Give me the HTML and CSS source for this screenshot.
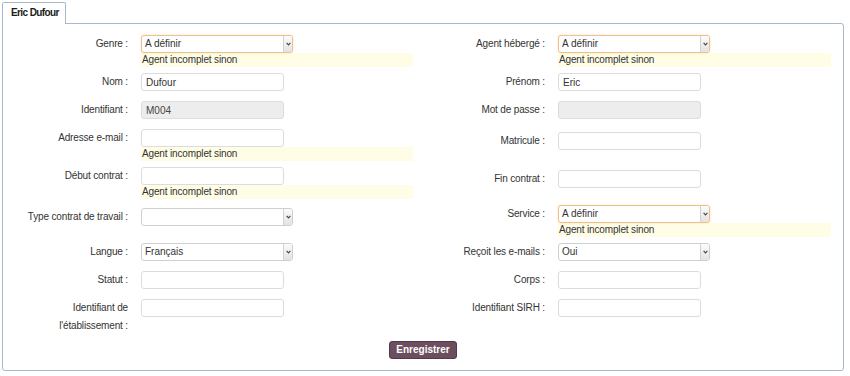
FILE: index.html
```html
<!DOCTYPE html>
<html lang="fr">
<head>
<meta charset="utf-8">
<title>Eric Dufour</title>
<link rel="stylesheet" href="styles.css">
</head>
<body>
<div class="page">
  <div class="tabs"><div class="tab">Eric Dufour</div></div>
  <form class="panel">
    <div class="grid">
      <!-- row 1 -->
      <label class="label">Genre :</label>
      <div class="control">
        <div class="select-wrap"><select class="select required"><option>A définir</option></select><span class="select-arrow"><svg width="5" height="4" viewBox="0 0 5 4"><path d="M0.6 0.8 L2.5 2.9 L4.4 0.8" fill="none" stroke="#444" stroke-width="1.1"/></svg></span></div>
        <div class="hint">Agent incomplet sinon</div>
      </div>
      <label class="label">Agent hébergé :</label>
      <div class="control">
        <div class="select-wrap"><select class="select required"><option>A définir</option></select><span class="select-arrow"><svg width="5" height="4" viewBox="0 0 5 4"><path d="M0.6 0.8 L2.5 2.9 L4.4 0.8" fill="none" stroke="#444" stroke-width="1.1"/></svg></span></div>
        <div class="hint">Agent incomplet sinon</div>
      </div>
      <!-- row 2 -->
      <label class="label">Nom :</label>
      <div class="control"><input class="input" type="text" value="Dufour"></div>
      <label class="label">Prénom :</label>
      <div class="control"><input class="input" type="text" value="Eric"></div>
      <!-- row 3 -->
      <label class="label">Identifiant :</label>
      <div class="control"><input class="input readonly" type="text" value="M004" readonly></div>
      <label class="label">Mot de passe :</label>
      <div class="control"><input class="input readonly" type="password" value="" readonly></div>
      <!-- row 4 -->
      <label class="label">Adresse e-mail :</label>
      <div class="control">
        <input class="input" type="text" value="">
        <div class="hint">Agent incomplet sinon</div>
      </div>
      <label class="label offset">Matricule :</label>
      <div class="control offset"><input class="input" type="text" value=""></div>
      <!-- row 5 -->
      <label class="label">Début contrat :</label>
      <div class="control">
        <input class="input" type="text" value="">
        <div class="hint">Agent incomplet sinon</div>
      </div>
      <label class="label offset">Fin contrat :</label>
      <div class="control offset"><input class="input" type="text" value=""></div>
      <!-- row 6 -->
      <label class="label offset">Type contrat de travail :</label>
      <div class="control offset">
        <div class="select-wrap"><select class="select"><option></option></select><span class="select-arrow"><svg width="5" height="4" viewBox="0 0 5 4"><path d="M0.6 0.8 L2.5 2.9 L4.4 0.8" fill="none" stroke="#444" stroke-width="1.1"/></svg></span></div>
      </div>
      <label class="label">Service :</label>
      <div class="control">
        <div class="select-wrap"><select class="select required"><option>A définir</option></select><span class="select-arrow"><svg width="5" height="4" viewBox="0 0 5 4"><path d="M0.6 0.8 L2.5 2.9 L4.4 0.8" fill="none" stroke="#444" stroke-width="1.1"/></svg></span></div>
        <div class="hint">Agent incomplet sinon</div>
      </div>
      <!-- row 7 -->
      <label class="label">Langue :</label>
      <div class="control">
        <div class="select-wrap"><select class="select"><option>Français</option></select><span class="select-arrow"><svg width="5" height="4" viewBox="0 0 5 4"><path d="M0.6 0.8 L2.5 2.9 L4.4 0.8" fill="none" stroke="#444" stroke-width="1.1"/></svg></span></div>
      </div>
      <label class="label">Reçoit les e-mails :</label>
      <div class="control">
        <div class="select-wrap"><select class="select"><option>Oui</option></select><span class="select-arrow"><svg width="5" height="4" viewBox="0 0 5 4"><path d="M0.6 0.8 L2.5 2.9 L4.4 0.8" fill="none" stroke="#444" stroke-width="1.1"/></svg></span></div>
      </div>
      <!-- row 8 -->
      <label class="label">Statut :</label>
      <div class="control"><input class="input" type="text" value=""></div>
      <label class="label">Corps :</label>
      <div class="control"><input class="input" type="text" value=""></div>
      <!-- row 9 -->
      <label class="label">Identifiant de<br>l'établissement :</label>
      <div class="control"><input class="input" type="text" value=""></div>
      <label class="label">Identifiant SIRH :</label>
      <div class="control"><input class="input" type="text" value=""></div>
    </div>
    <div class="actions"><button class="button" type="button">Enregistrer</button></div>
  </form>
</div>
</body>
</html>
```
FILE: styles.css
```css
* { box-sizing: border-box; }

body {
  margin: 0;
  background: #fff;
  color: #333;
  font-family: "Liberation Sans", Arial, sans-serif;
  font-size: 10px;
}

.page {
  padding: 2px 6px 0 2px;
}

.tabs {
  display: flex;
}

.tab {
  position: relative;
  z-index: 1;
  height: 22px;
  margin-bottom: -1px;
  padding: 0 6px 0 8px;
  border: 1px solid #a9b8c7;
  border-bottom: none;
  border-radius: 2px 2px 0 0;
  background: #fff;
  color: #1b1b1b;
  font-weight: bold;
  line-height: 20px;
  letter-spacing: -0.6px;
}

.panel {
  margin: 0;
  padding: 11px 0 11px 0;
  border: 1px solid #a9b8c7;
  border-radius: 0 3px 3px 3px;
}

.grid {
  display: grid;
  grid-template-columns: 138px 272px 145px 273px;
  row-gap: 10px;
  align-items: start;
}

.label {
  padding-right: 13px;
  text-align: right;
  line-height: 18px;
  letter-spacing: -0.15px;
  color: #333;
}

.offset {
  margin-top: 3px;
}

.control {
  display: flex;
  flex-direction: column;
  align-items: flex-start;
}

.input {
  width: 143px;
  height: 18px;
  margin: 0;
  padding: 0 4px;
  border: 1px solid #dcdcdc;
  border-radius: 3px;
  background: #fff;
  color: #333;
  font-family: inherit;
  font-size: 10px;
  outline: none;
}

.readonly {
  background: #ededed;
  color: #444;
}

.select-wrap {
  position: relative;
  width: 152px;
  height: 18px;
}

.select {
  display: block;
  width: 100%;
  height: 18px;
  margin: 0;
  padding: 0 12px 0 3px;
  border: 1px solid #cfcfcf;
  border-radius: 3px;
  background: #fff;
  color: #333;
  font-family: inherit;
  font-size: 10px;
  line-height: 16px;
  appearance: none;
  -webkit-appearance: none;
  outline: none;
}

.select.required {
  border-color: #f0c08a;
  box-shadow: 0 0 2px rgba(240, 175, 100, 0.45);
}

.select-arrow {
  position: absolute;
  top: 1px;
  right: 1px;
  bottom: 1px;
  width: 9px;
  display: flex;
  align-items: center;
  justify-content: center;
  border-left: 1px solid #d2d2d2;
  border-radius: 0 2px 2px 0;
  background: linear-gradient(#fbfbfb, #e3e3e3);
  pointer-events: none;
}

.hint {
  align-self: stretch;
  height: 14px;
  margin-bottom: -4px;
  padding-left: 1px;
  background: #fffde6;
  color: #333;
  line-height: 14px;
  letter-spacing: -0.15px;
}

.actions {
  display: flex;
  justify-content: center;
  margin-top: 6px;
}

.button {
  height: 18px;
  margin: 0;
  padding: 0 6px;
  border: 1px solid #52384a;
  border-radius: 3px;
  background: #6c4f5e;
  color: #fff;
  font-family: inherit;
  font-size: 10px;
  font-weight: bold;
  line-height: 16px;
  cursor: pointer;
}
```
